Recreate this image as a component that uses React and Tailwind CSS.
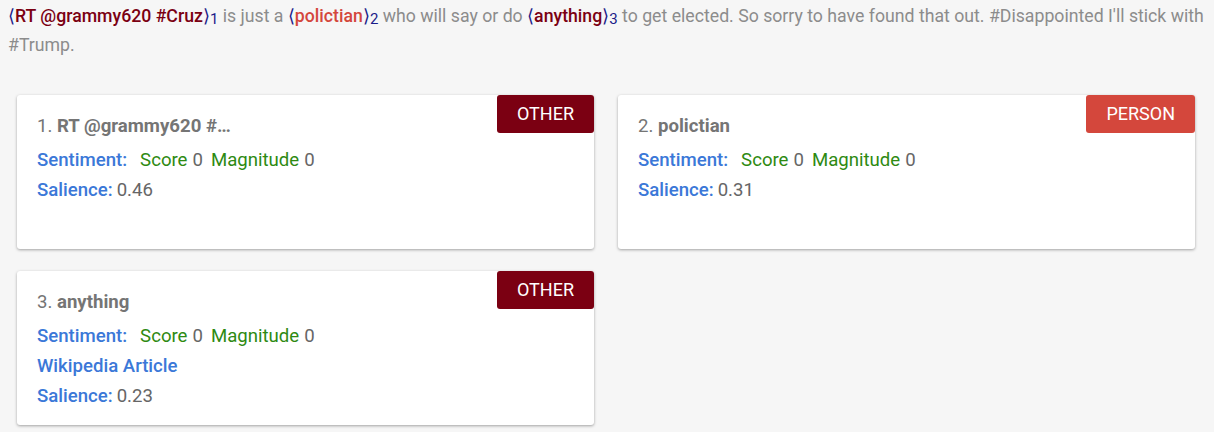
import React from 'react';

const entities = [
  { n: 1, name: 'RT @grammy620 #…', type: 'OTHER', badge: 'bg-[#7b0012]', salience: '0.46' },
  { n: 2, name: 'polictian', type: 'PERSON', badge: 'bg-[#d4473c]', salience: '0.31' },
  { n: 3, name: 'anything', type: 'OTHER', badge: 'bg-[#7b0012]', salience: '0.23', wiki: true },
];

const Mention = ({ text, n, color }) => (
  <span>
    <span className="text-[#1c1c8a]">⟨</span>
    <span className={`font-medium ${color}`}>{text}</span>
    <span className="text-[#1c1c8a]">⟩</span>
    <sub className="text-[15px] text-[#1c1c8a] relative top-[2px]">{n}</sub>
  </span>
);

const EntityCard = ({ e }) => (
  <div className="relative h-[154px] bg-white rounded-[3px] shadow-[0_1px_3px_rgba(0,0,0,0.35)] pl-5 pt-4 text-[18.6px]">
    <div className={`absolute top-0 right-0 h-[38px] px-[20px] leading-[38px] rounded-[3px] text-[18px] text-white ${e.badge}`}>
      {e.type}
    </div>
    <div className="leading-[30px] text-[#757575]">
      {e.n}. <span className="font-bold">{e.name}</span>
    </div>
    <div className="mt-[4px] leading-[30px]">
      <div className="flex">
        <span className="text-[#3b78d8] font-medium">Sentiment:</span>
        <span className="ml-[13px] text-[#2e8a12]">Score</span>
        <span className="ml-[5px] text-[#666]">0</span>
        <span className="ml-[8px] text-[#2e8a12]">Magnitude</span>
        <span className="ml-[5px] text-[#666]">0</span>
      </div>
      {e.wiki && <div className="text-[#3b78d8] font-medium">Wikipedia Article</div>}
      <div>
        <span className="text-[#3b78d8] font-medium">Salience:</span>
        <span className="ml-1 text-[#666]">{e.salience}</span>
      </div>
    </div>
  </div>
);

export default function App() {
  return (
    <div className="w-[1214px] h-[432px] bg-[#f6f6f6] overflow-hidden" style={{ fontFamily: 'Roboto, "Liberation Sans", sans-serif' }}>
      <p className="pl-2 pt-[2px] text-[17.7px] leading-[29px] text-[#8c8c8c]">
        <Mention text="RT @grammy620 #Cruz" n={1} color="text-[#7b0012]" /> is just a{' '}
        <Mention text="polictian" n={2} color="text-[#d4473c]" /> who will say or do{' '}
        <Mention text="anything" n={3} color="text-[#7b0012]" /> to get elected. So sorry to have found that out. #Disappointed I'll stick with #Trump.
      </p>
      <div className="grid grid-cols-2 gap-x-6 gap-y-[22px] pl-[17px] pr-[19px] mt-[35px]">
        {entities.map((e) => (
          <EntityCard key={e.n} e={e} />
        ))}
      </div>
    </div>
  );
}
